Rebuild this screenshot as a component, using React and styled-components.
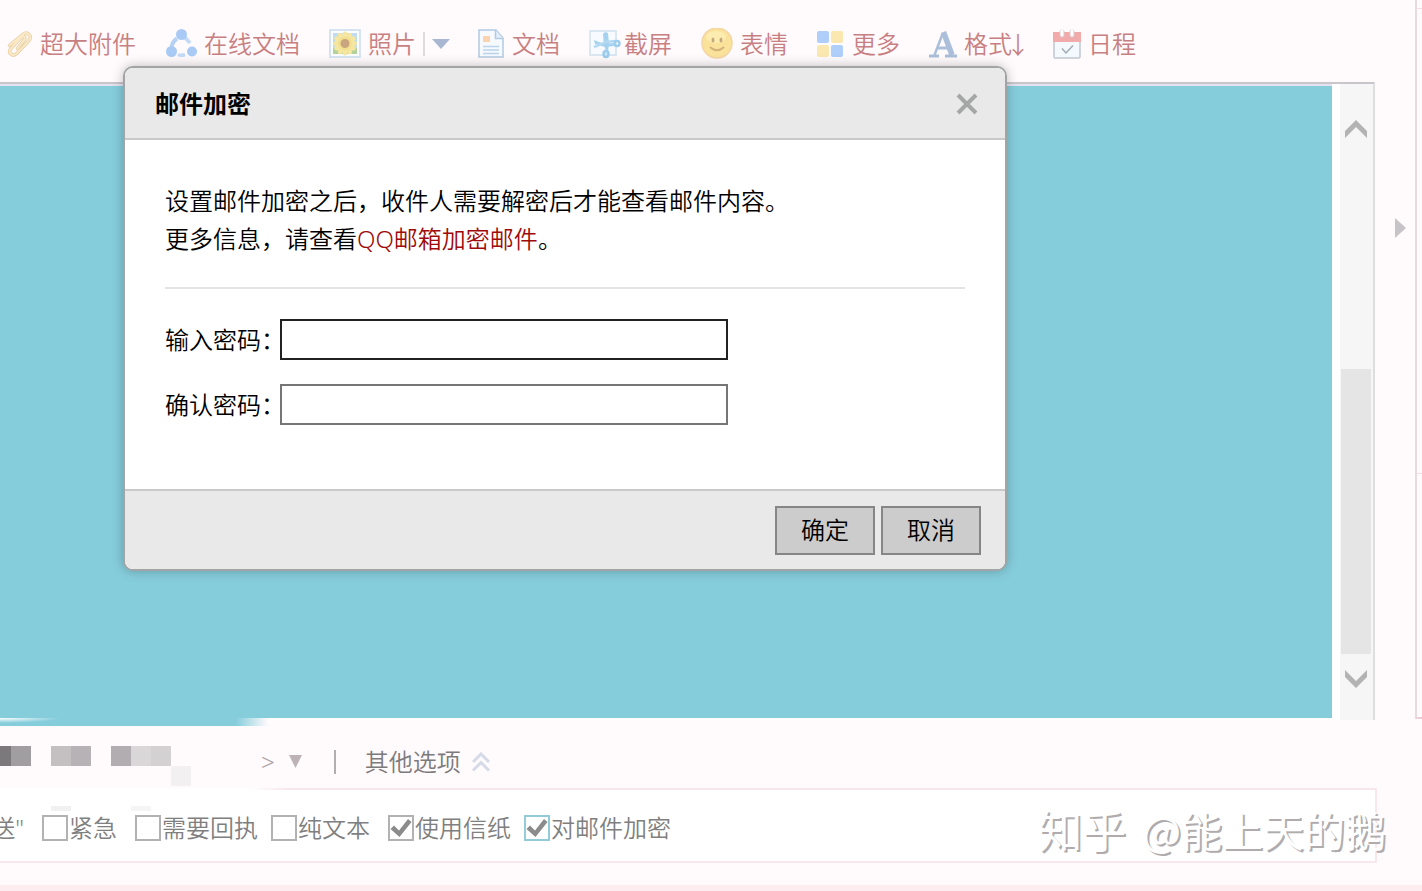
import React, { useState } from 'react';
import styled, { createGlobalStyle, css } from 'styled-components';

const AttachIcon = () => (
  <svg width="28" height="32" viewBox="0 0 28 32" fill="none" strokeLinecap="round">
    <path
      d="M12.5 20.5l6.8-8.6c1.6-2.2-.6-4.6-2.8-2.8L6 20.4c-3.6 4.6 1.2 8.8 5.4 5.2L24 12.6c3.6-4.6-1.4-9.6-6-6.2L4.500 17.500"
      stroke="#e6cfa6"
      strokeWidth="3.500"
    />
    <path
      d="M12.5 20.5l6.8-8.6c1.6-2.2-.6-4.6-2.8-2.8L6 20.4c-3.6 4.6 1.2 8.8 5.4 5.2L24 12.6c3.6-4.6-1.4-9.6-6-6.2L4.500 17.500"
      stroke="#fbe9c6"
      strokeWidth="2"
    />
  </svg>
);

const ShareDocIcon = () => (
  <svg width="32" height="32" viewBox="0 0 32 32" fill="none">
    <path d="M12 10.500Q7 14 6.500 20" stroke="#b5d1f4" strokeWidth="4" />
    <path d="M20 9.500L25 15" stroke="#c4dbf7" strokeWidth="4" />
    <path d="M13 26.500Q16 28 20 26.500" stroke="#c4dbf7" strokeWidth="3.500" />
    <circle cx="16.500" cy="6.500" r="5.500" fill="#a9caf5" />
    <circle cx="6.500" cy="23.500" r="5.500" fill="#a9caf5" />
    <circle cx="27" cy="23.500" r="5" fill="#a9caf5" />
  </svg>
);

const petals = [0, 30, 60, 90, 120, 150, 180, 210, 240, 270, 300, 330];

const PhotoIcon = () => (
  <svg width="32" height="32" viewBox="0 0 32 32">
    <rect x="1" y="2" width="30" height="27" fill="#fbfdff" stroke="#c9dcec" strokeWidth="1.500" />
    <rect x="4" y="5" width="24" height="21" fill="#bfdcf2" />
    <path d="M4 20q4 0 6 2h12q2-2 6-2v6H4z" fill="#b3d29b" />
    {petals.map((a) => (
      <ellipse key={a} cx="16" cy="7.500" rx="2.500" ry="4" fill="#f5e6a0" transform={`rotate(${a} 16 15.500)`} />
    ))}
    <circle cx="16" cy="15.500" r="7" fill="#f3df90" />
    <circle cx="16" cy="15.500" r="4.500" fill="#c9a57f" />
  </svg>
);

const DocIcon = () => (
  <svg width="28" height="32" viewBox="0 0 28 32" fill="none">
    <path d="M2 2h17l7 8v19H2z" fill="#f6faff" stroke="#b3cae2" strokeWidth="1.500" />
    <path d="M18.500 2v8.500H26" fill="#e3eefa" stroke="#b3cae2" strokeWidth="1.500" />
    <rect x="6" y="8" width="7" height="6" fill="#fbd3ae" />
    <path d="M6 18.500h16M6 22h16M6 25.500h16" stroke="#bcd4ea" strokeWidth="1.500" />
  </svg>
);

const CutIcon = () => (
  <svg width="32" height="32" viewBox="0 0 32 32" fill="none">
    <rect x="1" y="3" width="26" height="24" fill="#f7fbff" stroke="#cfe2f0" strokeWidth="1.500" />
    <path d="M16 4l-2 2 1 11 2 6h2l1-7-1-11z" fill="#a5d2ee" />
    <path d="M5 12l1 4 10 3 9-1-1-3-9 1z" fill="#a5d2ee" />
    <path d="M5 19l12-5 9-1" stroke="#b4daf1" strokeWidth="2.500" />
    <ellipse cx="28" cy="15.500" rx="2.500" ry="2.500" stroke="#9ccdec" strokeWidth="2.500" />
    <ellipse cx="17" cy="26" rx="2.500" ry="3" fill="#cfe8f7" stroke="#9ccdec" strokeWidth="2.500" />
  </svg>
);

const SmileIcon = () => (
  <svg width="32" height="32" viewBox="0 0 32 32" fill="none">
    <circle cx="16" cy="15" r="15" fill="#fbe29a" stroke="#f4d5a4" strokeWidth="1.500" />
    <ellipse cx="15" cy="9" rx="10" ry="6" fill="#fdecb0" />
    <ellipse cx="12" cy="12" rx="1.500" ry="2.500" fill="#c4a97c" />
    <ellipse cx="20" cy="12" rx="1.500" ry="2.500" fill="#c4a97c" />
    <path d="M9.500 19.500q6.500 5.500 13 0" stroke="#d3b37b" strokeWidth="2" strokeLinecap="round" />
  </svg>
);

const MoreIcon = () => (
  <svg width="28" height="32" viewBox="0 0 28 32">
    <rect x="0" y="3" width="12" height="12" rx="2" fill="#b0cefa" />
    <rect x="14" y="3" width="12" height="12" rx="2" fill="#fae8b0" />
    <rect x="0" y="17" width="12" height="12" rx="2" fill="#fae8b0" />
    <rect x="14" y="17" width="12" height="12" rx="2" fill="#b0cefa" />
  </svg>
);

const FormatIcon = () => (
  <svg width="28" height="32" viewBox="0 0 28 32" fill="none" stroke="#abbfda">
    <path d="M13.500 6L5.500 27" strokeWidth="2.500" />
    <path d="M14.500 4L23 27" strokeWidth="5.500" />
    <path d="M9 20h10" strokeWidth="3" />
    <path d="M0 28h10M16 28h13" strokeWidth="3" />
  </svg>
);

const CalendarIcon = () => (
  <svg width="28" height="32" viewBox="0 0 28 32" fill="none">
    <rect x="1" y="5" width="26" height="25" rx="1" fill="#f3f9fd" stroke="#c0c8d0" strokeWidth="1.500" />
    <path d="M0 4h28v10H0z" fill="#f2abab" />
    <path d="M9 4v3M19 4v3" stroke="#ddc8cc" strokeWidth="5" strokeLinecap="round" />
    <path d="M9 3v4M19 3v4" stroke="#fff" strokeWidth="3" strokeLinecap="round" />
    <path d="M9 20.500l4 4.500 7-7.500" stroke="#a2aab2" strokeWidth="1.500" />
  </svg>
);

const tools = [
  { label: '超大附件', icon: <AttachIcon /> },
  { label: '在线文档', icon: <ShareDocIcon /> },
  { label: '照片', icon: <PhotoIcon />, menu: true },
  { label: '文档', icon: <DocIcon /> },
  { label: '截屏', icon: <CutIcon />, tight: true },
  { label: '表情', icon: <SmileIcon /> },
  { label: '更多', icon: <MoreIcon /> },
  { label: '格式', icon: <FormatIcon />, arrow: true },
  { label: '日程', icon: <CalendarIcon /> },
];

const mosaic = [
  [0, 0, 11, 20, '#7b797b'],
  [11, 0, 20, 20, '#a19ea1'],
  [51, 0, 20, 20, '#c4c0c2'],
  [71, 0, 20, 20, '#b6b2b5'],
  [111, 0, 20, 20, '#b1adb0'],
  [131, 0, 20, 20, '#dad7d9'],
  [151, 0, 20, 20, '#d4d1d3'],
  [171, 20, 20, 20, '#f3f0f2'],
  [51, 60, 20, 5, '#f1f1f1'],
  [131, 60, 20, 5, '#f5f5f5'],
];

const initialOptions = [
  { id: 'urgent', label: '紧急', checked: false, wide: true },
  { id: 'receipt', label: '需要回执', checked: false },
  { id: 'plain', label: '纯文本', checked: false, wide: true },
  { id: 'paper', label: '使用信纸', checked: true },
  { id: 'encrypt', label: '对邮件加密', checked: true, active: true },
];

const App = () => {
  const [options, setOptions] = useState(initialOptions);

  const toggle = (id) =>
    setOptions(options.map((o) => (o.id === id ? { ...o, checked: !o.checked } : o)));

  return (
    <Page>
      <GlobalStyle />
      <Workspace>
        <Compose>
          <Toolbar>
            {tools.map((tool) => (
              <ToolGroup key={tool.label}>
                <Tool type="button" $tight={tool.tight}>
                  {tool.icon}
                  <ToolLabel>
                    {tool.label}
                    {tool.arrow && <Arrow>↓</Arrow>}
                  </ToolLabel>
                </Tool>
                {tool.menu && (
                  <ToolMenu type="button" aria-label="照片菜单">
                    <svg width="18" height="10" viewBox="0 0 18 10">
                      <path d="M0 0h18l-9 10z" fill="#a9b7d2" />
                    </svg>
                  </ToolMenu>
                )}
              </ToolGroup>
            ))}
          </Toolbar>
          <Editor>
            <Canvas />
            <Scrollbar>
              <svg width="22" height="20" viewBox="0 0 22 20">
                <path d="M0 12L11 1l11 11v7L11 8 0 19z" fill="#b3b3b3" />
              </svg>
              <Thumb />
              <svg width="22" height="20" viewBox="0 0 22 20">
                <path d="M0 1v7l11 11L22 8V1L11 12z" fill="#b3b3b3" />
              </svg>
            </Scrollbar>
          </Editor>
        </Compose>
        <Handle type="button" aria-label="展开侧栏">
          <svg width="12" height="20" viewBox="0 0 12 20">
            <path d="M0 0l11 10L0 20z" fill="#c6c4c6" />
          </svg>
        </Handle>
        <SidePanel>
          <SideBlock />
          <SideBlock $grow />
          <SideBlock $last />
        </SidePanel>
      </Workspace>

      <SenderRow>
        <Mosaic width="191" height="40" viewBox="0 0 191 40">
          {mosaic.map(([x, y, w, h, fill]) => (
            <rect key={`${x}-${y}`} x={x} y={y} width={w} height={h} fill={fill} />
          ))}
        </Mosaic>
        <Sender>
          <span>&gt;</span>
          <svg width="13" height="14" viewBox="0 0 13 14">
            <path d="M0 0h13L6.500 13z" fill="#bdb3b7" />
          </svg>
        </Sender>
        <Separator />
        <OtherOptions type="button">
          其他选项
          <svg width="18" height="20" viewBox="0 0 18 20" fill="none" stroke="#d6dae6" strokeWidth="3">
            <path d="M1 10l8-8 8 8M1 18.500l8-8 8 8" />
          </svg>
        </OtherOptions>
      </SenderRow>

      <Options>
        <Hint>送"</Hint>
        {options.map((o) => (
          <Option key={o.id} htmlFor={o.id} $wide={o.wide}>
            <Check
              id={o.id}
              type="checkbox"
              checked={o.checked}
              onChange={() => toggle(o.id)}
              $active={o.active}
            />
            {o.checked && (
              <Tick viewBox="0 0 26 26">
                <path d="M2.500 14L6 10.500l5 5L20 4l3.500 3L11.500 22z" fill="#8b8b8b" />
              </Tick>
            )}
            {o.label}
          </Option>
        ))}
      </Options>
      <BottomBand />

      <Watermark>
        <Brand>知乎</Brand>
        <span>@能上天的鹅</span>
      </Watermark>

      <Dialog role="dialog" aria-labelledby="dialog-title">
        <DialogHeader>
          <DialogTitle id="dialog-title">邮件加密</DialogTitle>
          <Close type="button" aria-label="关闭">
            <svg width="22" height="22" viewBox="0 0 22 22">
              <path d="M2 2l18 18M20 2L2 20" stroke="#a5a7a7" strokeWidth="4" />
            </svg>
          </Close>
        </DialogHeader>
        <DialogBody>
          <Intro>
            设置邮件加密之后，收件人需要解密后才能查看邮件内容。
            <br />
            更多信息，请查看<a href="#help">QQ邮箱加密邮件</a>。
          </Intro>
          <Field>
            <label htmlFor="password">输入密码：</label>
            <PasswordInput id="password" type="password" $focused />
          </Field>
          <Field>
            <label htmlFor="confirm">确认密码：</label>
            <PasswordInput id="confirm" type="password" />
          </Field>
        </DialogBody>
        <DialogFooter>
          <DialogButton type="button">确定</DialogButton>
          <DialogButton type="button">取消</DialogButton>
        </DialogFooter>
      </Dialog>
    </Page>
  );
};

const GlobalStyle = createGlobalStyle`
  * {
    box-sizing: border-box;
  }
  body {
    margin: 0;
    background: #fffafc;
    font-family: 'Noto Sans', 'Noto Sans CJK SC', sans-serif;
    font-size: 24px;
    font-weight: 350;
    line-height: 38px;
  }
  button {
    padding: 0;
    border: 0;
    background: none;
    color: inherit;
    font: inherit;
  }
  svg {
    display: block;
    flex: none;
  }
`;

const Page = styled.div`
  position: relative;
  display: flex;
  flex-direction: column;
  min-height: 100vh;
  overflow: hidden;
`;

const Workspace = styled.div`
  flex: 1;
  display: flex;
`;

const Compose = styled.main`
  flex: 1;
  min-width: 0;
  display: flex;
  flex-direction: column;
`;

const Toolbar = styled.div`
  display: flex;
  align-items: center;
  gap: 29px;
  height: 82px;
  padding: 6px 0 0 5px;
  color: #c87f81;
`;

const ToolGroup = styled.div`
  display: flex;
  align-items: center;
  white-space: nowrap;
`;

const Tool = styled.button`
  display: flex;
  align-items: center;
  gap: ${(props) => (props.$tight ? '3px' : '7px')};
`;

const ToolLabel = styled.span`
  display: flex;
`;

const Arrow = styled.span`
  display: flex;
  justify-content: center;
  width: 12px;
  font-family: 'Noto Sans CJK SC', sans-serif;
`;

const ToolMenu = styled.button`
  display: flex;
  align-items: center;
  height: 24px;
  margin: 0 -2px 0 7px;
  padding-left: 7px;
  border-left: 2px solid #dcdadd;
`;

const Editor = styled.div`
  flex: 1;
  display: flex;
  border-top: 2px solid #cac4cb;
  border-right: 2px solid #dfdde0;
  background: #fff;
`;

const Canvas = styled.div`
  position: relative;
  flex: 1;
  margin: 0 8px 2px 0;
  border-top: 2px solid #e2e3ee;
  background: #86cddc;

  &::after {
    content: '';
    position: absolute;
    top: 100%;
    left: 0;
    width: 270px;
    height: 8px;
    background: radial-gradient(60px 5px at 0 0, #fff, transparent),
      linear-gradient(to right, #86cddc 236px, #fffafc 268px);
  }
`;

const Scrollbar = styled.div`
  display: flex;
  flex-direction: column;
  align-items: center;
  width: 33px;
  padding: 35px 2px 31px 1px;
  background: #f6f6f6;
`;

const Thumb = styled.div`
  width: 30px;
  height: 285px;
  margin: auto 0 15px;
  background: #e5e5e5;
`;

const Handle = styled.button`
  display: flex;
  justify-content: center;
  width: 40px;
  padding: 218px 0 0 12px;
`;

const SidePanel = styled.aside`
  display: flex;
  flex-direction: column;
  width: 7px;
  margin-bottom: 1px;
  border-left: 2px solid #e7dbe1;
  border-bottom: 2px solid #eeccd6;
`;

const SideBlock = styled.div`
  height: ${(props) => (props.$last ? '243px' : '9px')};
  border-bottom: ${(props) => (props.$last ? '0' : '1px solid #f5dde3')};
  ${(props) =>
    props.$grow &&
    css`
      flex: 1;
    `}
`;

const SenderRow = styled.div`
  display: flex;
  align-items: center;
  height: 68px;
  padding-top: 16px;
  color: #7d7a7c;
`;

const Mosaic = styled.svg`
  position: relative;
  z-index: 1;
  align-self: flex-end;
  margin-bottom: 2px;
  overflow: visible;
`;

const Sender = styled.div`
  display: flex;
  align-items: center;
  gap: 14px;
  margin-left: 70px;
  color: #a9a1a5;
`;

const Separator = styled.div`
  width: 2px;
  height: 24px;
  margin: 0 29px 0 32px;
  background: #b3adb0;
`;

const OtherOptions = styled.button`
  display: flex;
  align-items: center;
  gap: 11px;
`;

const Options = styled.div`
  display: flex;
  align-items: center;
  gap: 13px;
  height: 75px;
  margin-right: 45px;
  padding-top: 6px;
  border: solid #f8e8ec;
  border-width: 0 2px 2px 0;
  background: linear-gradient(to right, #fff 250px, #f8e6ea 290px) top / 100% 2px no-repeat #fff;
  color: #7f7f7f;
  white-space: nowrap;
`;

const Hint = styled.span`
  display: flex;
  justify-content: flex-end;
  width: 24px;
  margin-right: 5px;
`;

const Option = styled.label`
  position: relative;
  display: flex;
  align-items: center;
  gap: 1px;
  margin-right: ${(props) => (props.$wide ? '5px' : '0')};
`;

const Check = styled.input`
  appearance: none;
  width: 26px;
  height: 26px;
  margin: 0;
  border: 2px solid ${(props) => (props.$active ? '#93ccd8' : '#b2b2b2')};
  background: #fff;
`;

const Tick = styled.svg`
  position: absolute;
  left: 0;
  width: 26px;
  height: 26px;
  pointer-events: none;
`;

const BottomBand = styled.div`
  height: 6px;
  margin-top: 22px;
  background: #fdedf0;
`;

const Watermark = styled.div`
  position: absolute;
  right: 36px;
  bottom: 32px;
  display: flex;
  align-items: center;
  gap: 16px;
  height: 60px;
  color: #fff;
  font-family: 'Noto Sans CJK SC', sans-serif;
  font-size: 41px;
  font-weight: 400;
  text-shadow: 2px 2px 0 #b0acae;
`;

const Brand = styled.span`
  font-size: 44px;
`;

const Dialog = styled.section`
  position: absolute;
  top: 66px;
  left: 123px;
  width: 884px;
  border: 2px solid #a2a5a6;
  border-radius: 10px;
  background: #fff;
  box-shadow: 0 0 12px rgba(0, 0, 0, 0.25);
  color: #000;
  overflow: hidden;
`;

const DialogHeader = styled.header`
  display: flex;
  align-items: center;
  justify-content: space-between;
  height: 72px;
  padding: 2px 27px 0 30px;
  border-bottom: 2px solid #c9c9c9;
  background: #e9e9e9;
`;

const DialogTitle = styled.h2`
  margin: 0;
  font-size: 24px;
  font-weight: 700;
`;

const Close = styled.button`
  display: flex;
`;

const DialogBody = styled.div`
  padding: 42px 40px 64px;
`;

const Intro = styled.p`
  margin: 0 0 30px;
  padding-bottom: 29px;
  border-bottom: 2px solid #e4e4e4;

  a {
    color: #a00a0a;
    text-decoration: none;
  }
`;

const Field = styled.div`
  display: flex;
  align-items: center;

  & + & {
    margin-top: 24px;
  }

  label {
    width: 115px;
    white-space: nowrap;
    font-feature-settings: 'halt';
  }
`;

const PasswordInput = styled.input`
  width: 448px;
  height: 41px;
  padding: 0 8px;
  border: 2px solid ${(props) => (props.$focused ? '#222' : '#767676')};
  background: #fff;
  font: inherit;
  outline: none;
`;

const DialogFooter = styled.footer`
  display: flex;
  justify-content: flex-end;
  gap: 6px;
  padding: 15px 24px 14px;
  border-top: 2px solid #c9c9c9;
  background: #e9e9e9;
`;

const DialogButton = styled.button`
  width: 100px;
  height: 49px;
  padding-bottom: 2px;
  border: 2px solid #868686;
  background: #ccc;
`;

export default App;
